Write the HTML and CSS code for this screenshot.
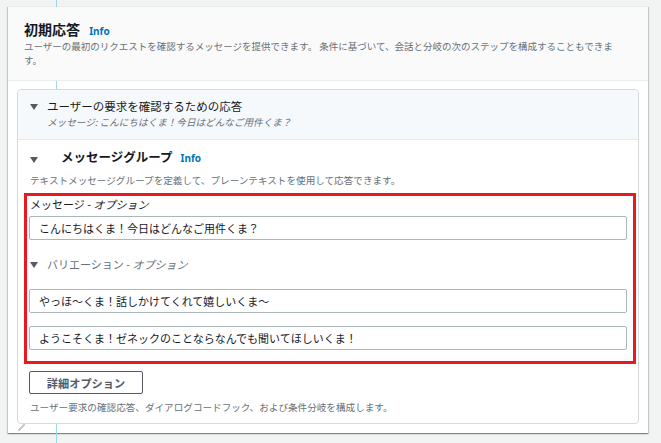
FILE: index.html
```html
<!DOCTYPE html>
<html lang="ja">
<head>
  <meta charset="UTF-8" />
  <meta name="viewport" content="width=device-width, initial-scale=1.0">
  <title>初期応答</title>
  <link rel="stylesheet" href="styles.css">
</head>
<body>

  <div class="guide"></div>

  <div class="panel">
    <!-- Header -->
    <div class="panel-head">
      <h2>初期応答 <a class="info" href="#">Info</a></h2>
      <p class="desc">ユーザーの最初のリクエストを確認するメッセージを提供できます。 条件に基づいて、会話と分岐の次のステップを構成することもできます。</p>
    </div>

    <div class="panel-body">
      <div class="box">

        <!-- Confirmation response -->
        <div class="summary">
          <div class="summary-title"><span class="caret"></span>ユーザーの要求を確認するための応答</div>
          <div class="summary-sub">メッセージ: こんにちはくま！今日はどんなご用件くま？</div>
        </div>

        <!-- Message group -->
        <div class="group">
          <div class="group-title">
            <span class="caret big"></span>
            <h3>メッセージグループ</h3>
            <a class="info" href="#">Info</a>
          </div>
          <p class="desc">テキストメッセージグループを定義して、プレーンテキストを使用して応答できます。</p>

          <div class="highlight">
            <div class="label">メッセージ - <em>オプション</em></div>
            <input type="text" class="field" value="こんにちはくま！今日はどんなご用件くま？">

            <div class="variation"><span class="caret"></span>バリエーション - <em>オプション</em></div>
            <input type="text" class="field first" value="やっほ〜くま！話しかけてくれて嬉しいくま〜">
            <input type="text" class="field next" value="ようこそくま！ゼネックのことならなんでも聞いてほしいくま！">
          </div>

          <button class="btn">詳細オプション</button>
          <p class="desc foot">ユーザー要求の確認応答、ダイアログコードフック、および条件分岐を構成します。</p>
        </div>

      </div>
    </div>
  </div>

</body>
</html>
```

FILE: styles.css
```css
body {
  margin: 0;
  padding: 6px 13px 10px 8px;
  background: #f2f3f3;
  font-family: "Noto Sans CJK JP", "Noto Sans", sans-serif;
  color: #16191f;
  position: relative;
}

/* thin column guide behind the cards */
.guide {
  position: absolute;
  top: 0;
  bottom: 0;
  left: 56px;
  width: 1px;
  background: #9cd9e3;
  z-index: 1;
}

.panel {
  background: #fff;
  border-top: 1px solid #eaeded;
  box-shadow: 0 1px 1px 0 rgba(0,28,36,0.3), 1px 1px 1px 0 rgba(0,28,36,0.15), -1px 1px 1px 0 rgba(0,28,36,0.15);
}

.panel-head {
  position: relative;
  z-index: 2;
  background: #fafafa;
  border-bottom: 1px solid #eaeded;
  padding: 12px 27px 13px 16px;
}

.panel-head h2 {
  margin: 0;
  height: 20px;
  font-size: 14px;
  line-height: 20px;
  font-weight: bold;
}

.info {
  color: #0073bb;
  font-family: "Noto Sans", "Open Sans", sans-serif;
  font-size: 10px;
  line-height: 1;
  font-weight: bold;
  text-decoration: none;
  margin-left: 6px;
}

.desc {
  margin: 0;
  font-size: 9.5px;
  line-height: 14px;
  color: #687078;
}

.panel-body {
  padding: 8px 9px 9px 9px;
}

.box {
  position: relative;
  z-index: 2;
  background: #fff;
  border: 1px solid #d5dbdb;
  border-radius: 4px;
}

.box::after {
  content: "";
  position: absolute;
  left: 0;
  bottom: -8px;
  width: 7px;
  height: 7px;
  background: linear-gradient(to bottom right, transparent 42%, #c6cccc 42%, #c6cccc 58%, transparent 58%);
}

.caret {
  display: inline-block;
  width: 0;
  height: 0;
  border-left: 4px solid transparent;
  border-right: 4px solid transparent;
  border-top: 6px solid #545b64;
  vertical-align: middle;
}

.caret.big {
  border-top-width: 6px;
  margin-top: 5px;
}

.summary {
  background: #f6f9fc;
  border-bottom: 1px solid #e4e8ea;
  border-radius: 4px 4px 0 0;
  padding: 8px 12px 9px 12px;
}

.summary-title {
  height: 16px;
  font-size: 11.5px;
  line-height: 16px;
}

.summary-title .caret {
  margin: -2px 9px 0 0;
}

.summary-sub {
  padding-left: 17px;
  font-size: 9.6px;
  line-height: 16px;
  font-style: italic;
  color: #687078;
}

.group {
  padding: 8px 11px 9px 11px;
}

.group-title {
  display: flex;
  align-items: center;
  padding-left: 1px;
  height: 18px;
}

.group-title h3 {
  margin: 0 0 0 23px;
  font-size: 12.5px;
  line-height: 18px;
  font-weight: bold;
}

.group-title .info {
  margin-left: 8px;
  margin-top: 2px;
}

.group > .desc {
  margin-top: 7px;
  padding-left: 1px;
  font-size: 9.6px;
}

.highlight {
  margin: 6px -9px 0 -5px;
  border: 3px solid #e8191f;
  padding: 1px 6px 11px 2px;
}

.label {
  height: 14px;
  padding-left: 1px;
  font-size: 11px;
  line-height: 14px;
}

.field {
  display: block;
  box-sizing: border-box;
  width: 100%;
  height: 24px;
  margin: 5px 0 0;
  padding: 0 9px;
  border: 1px solid #aab7b8;
  border-radius: 2px;
  font-family: "Noto Sans CJK JP", "Noto Sans", sans-serif;
  font-size: 11px;
  color: #16191f;
  background: #fff;
}

.field.first {
  margin-top: 17px;
}

.field.next {
  margin-top: 13px;
}

.variation {
  height: 16px;
  margin-top: 16px;
  padding-left: 1px;
  font-size: 11px;
  line-height: 16px;
  color: #687078;
}

.variation .caret {
  margin: -2px 9px 0 0;
}

.btn {
  display: block;
  margin-top: 7px;
  width: 114px;
  height: 23px;
  padding: 0;
  background: #fff;
  border: 1px solid #545b64;
  border-radius: 2px;
  font-family: "Noto Sans CJK JP", "Noto Sans", sans-serif;
  font-size: 11.2px;
  font-weight: bold;
  color: #545b64;
  cursor: pointer;
}

.desc.foot {
  margin-top: 6px;
  padding-left: 1px;
}
```
